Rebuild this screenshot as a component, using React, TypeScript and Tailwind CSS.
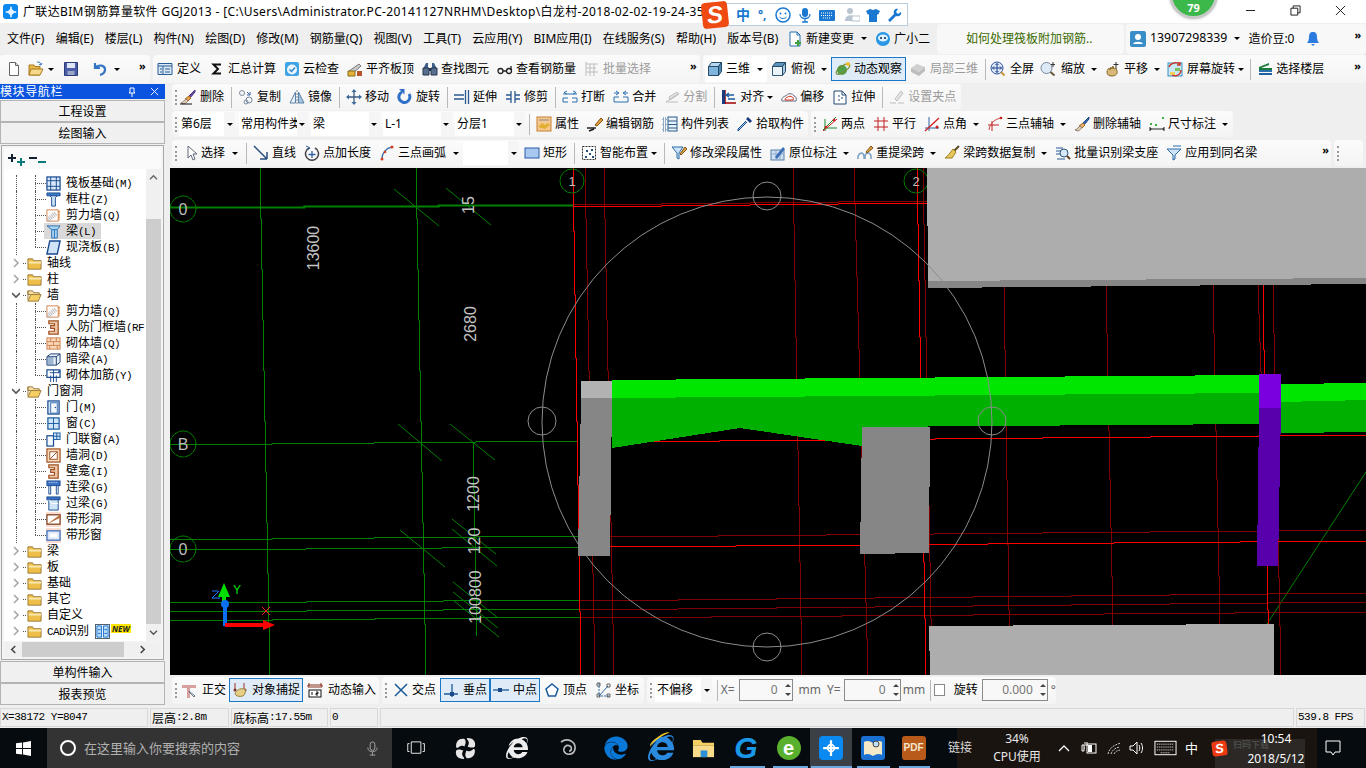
import type { ReactNode } from 'react'
import { FaEdge, FaInternetExplorer } from 'react-icons/fa'

const I: Record<string, ReactNode> = {
  new: <><path d="M3.5 1.5h6l3 3v10h-9z" fill="#fff" stroke="#666" /><path d="M9.5 1.5v3h3" fill="#ddd" stroke="#666" /></>,
  open: <><path d="M1 4h5l1 1.5h5V14H1z" fill="#e8b94a" stroke="#a87a20" /><path d="M3 8h12l-3 6H1z" fill="#f6d98a" stroke="#a87a20" /><path d="M9 1c3 0 4 1 4 3M13 4l-2-.5M13 4l1-2" stroke="#3a78c8" fill="none" /></>,
  save: <><path d="M1.5 1.5h13v13h-13z" fill="#4a5fa8" stroke="#2b3a78" /><path d="M4 2h8v5H4z" fill="#dfe6f6" /><path d="M4.5 10h7v4h-7z" fill="#9aa7c8" /></>,
  undo: <path d="M3 2v5h5M3.5 6.5C7 3 13 4.5 13 8.5c0 2.500-2 4.500-5 5.500" fill="none" stroke="#3474c4" strokeWidth="2.200" />,
  define: <><path d="M1 2.500h14v11H1z" fill="#dbe8f6" stroke="#2a5f95" /><path d="M1 5h14M6 5v8.500M3 8h2M3 11h2M8 8h5M8 11h5" stroke="#2a5f95" /></>,
  sigma: <path d="M12 3.500H4.500L9 8l-4.500 4.500H12" fill="none" stroke="#111" strokeWidth="2" />,
  cloud: <><rect x="1" y="1" width="14" height="14" rx="2" fill="#3fa3e4" /><circle cx="8" cy="8.500" r="5" fill="#eaf6ff" /><path d="M5.500 8.500l2 2 3.500-4" fill="none" stroke="#2a83c8" strokeWidth="1.500" /></>,
  flat: <><path d="M2 10l10-7 2 2-9 8z" fill="#c9c9c9" stroke="#777" /><path d="M1 10h7v5H1z" fill="#e4b43a" stroke="#8a6a18" /><path d="M10 10h5v5h-5z" fill="#b8542c" /></>,
  binoc: <><path d="M2 6l2-4h2v5H2zM14 6l-2-4h-2v5h4z" fill="#3d5f8a" /><path d="M1 7h6v7H1zM9 7h6v7H9z" fill="#5a6f8f" stroke="#23364f" /><path d="M7 7h2v3H7z" fill="#23364f" /></>,
  glasses: <><circle cx="3.500" cy="10" r="2.500" fill="none" stroke="#222" strokeWidth="1.300" /><circle cx="12" cy="10" r="2.500" fill="none" stroke="#222" strokeWidth="1.300" /><path d="M6 10h3.500M14 9V5" stroke="#222" strokeWidth="1.300" /></>,
  batch: <path d="M2 1v14M2 3h12M2 7h10M2 11h12M6 3v12M10 3v12" stroke="#bdbdbd" fill="none" />,
  cube: <><path d="M1.500 5.500h10v9h-10z" fill="#7fb4dc" stroke="#244a68" /><path d="M1.500 5.500l3-4h10l-3 4z" fill="#b7d8ee" stroke="#244a68" /><path d="M11.500 5.500l3-4v9l-3 4z" fill="#4e86b2" stroke="#244a68" /></>,
  cubeTop: <><path d="M1.500 5.500h10v9h-10z" fill="#eaf3fa" stroke="#345a78" /><path d="M1.500 5.500l3-4h10l-3 4z" fill="#5c93bd" stroke="#244a68" /><path d="M11.500 5.500l3-4v9l-3 4z" fill="#a8cbe3" stroke="#244a68" /></>,
  orbit: <><circle cx="7" cy="9" r="5" fill="#4ea04a" /><ellipse cx="8" cy="8" rx="8" ry="3" transform="rotate(-35 8 8)" fill="none" stroke="#7a8a2a" /><circle cx="13" cy="3" r="2" fill="#f0c030" /></>,
  local3d: <><path d="M1 7l6-4 8 3-6 5z" fill="#d0d0d0" /><path d="M1 7l8 4v4l-8-4zM9 11l6-5v4l-6 5z" fill="#bcbcbc" /></>,
  full: <><circle cx="7" cy="7" r="6" fill="#dfeafa" stroke="#2a4f9a" /><path d="M7 2.500v9M2.500 7h9M7 2.500l-1.500 1.500M7 2.500l1.500 1.500M7 11.500l-1.500-1.500M7 11.500l1.500-1.500M2.500 7l1.500-1.500M2.500 7l1.500 1.500M11.500 7l-1.500-1.500M11.500 7l-1.500 1.500" stroke="#1c3f8a" fill="none" /><path d="M11 11l3.500 3.500" stroke="#c8963a" strokeWidth="2" /></>,
  zoom: <><circle cx="6.500" cy="7" r="5.500" fill="#dceaf8" stroke="#7a8a9a" /><path d="M10.500 11l4 3.500" stroke="#6a5a3a" strokeWidth="2" /><path d="M13 1v5M11 3.500h4" stroke="#333" /></>,
  pan: <><path d="M2 11c0-2 1-3 2-4l1 2 1-3 1 2 1-3 1 3 2-1 1 3c1 3-2 5-5 5-3 0-5-1-5-4z" fill="#d8b878" stroke="#8a6a30" /><path d="M11 1v6M8.500 3.500h5" stroke="#333" /></>,
  screen: <><rect x="1" y="2" width="14" height="13" fill="#c8e8f4" stroke="#3a90c0" /><path d="M3 11h5v3H3z" fill="#f0d060" /><path d="M8 7h5v3H8z" fill="#7cc060" /><path d="M2 6a7 6 0 0 1 11-3M13 1v3h-3M14 9a6 6 0 0 1-9 5" fill="none" stroke="#d03020" strokeWidth="1.300" /></>,
  layers: <><path d="M2 6l10-4v2L4 7h11v2H2z" fill="#1a7a3a" /><path d="M2 9l13 0v2H2z" fill="#2a70b0" /><path d="M2 12h13v2H2z" fill="#2060a0" /></>,
  erase: <><path d="M15 1l-6 6 1 2 5-6z" fill="#6a4fa0" stroke="#4a3080" /><path d="M9 7l2 2-3 3-3-2z" fill="#e6a050" stroke="#a06820" /><path d="M1 14c2-1 4-3 5-4l2 2c-1 1-2 2-4 3z" fill="#e0d0b8" stroke="#908070" /><path d="M0 15h12" stroke="#111" /></>,
  copy: <><circle cx="4" cy="4" r="2.500" fill="none" stroke="#7a8aa0" /><circle cx="11" cy="11" r="3" fill="none" stroke="#7a8aa0" /><circle cx="8" cy="13" r="2" fill="none" stroke="#7a8aa0" /><path d="M9 3l3 3M12 3v3H9" fill="none" stroke="#3a6aa8" /></>,
  mirror: <><path d="M6.500 3v11H1z" fill="#e8f0f8" stroke="#5a80a8" /><path d="M9.500 3v11H15z" fill="#a8c8e0" stroke="#5a80a8" /><path d="M8 1v14" stroke="#7a8a9a" strokeDasharray="2 1" /></>,
  move: <><path d="M8 1v14M1 8h14" stroke="#3a5a80" strokeWidth="1.300" /><path d="M8 0l2.500 3h-5zM8 16l2.500-3h-5zM0 8l3-2.500v5zM16 8l-3-2.500v5z" fill="#3a6aa0" /></>,
  rotate: <><path d="M12 5A5.500 5.500 0 1 1 5 3" fill="none" stroke="#2e6fc8" strokeWidth="3" /><path d="M2 0h5.500v5.500z" fill="#2e6fc8" /></>,
  extend: <path d="M0 6h10M0 10h10M11.500 1v14M14.500 1v14M10 6H7M10 10H7" stroke="#2a5a90" strokeWidth="1.300" />,
  trim: <path d="M1 6h5M1 10h5M10 6h5M10 10h5M6 2v12M10 2v12" stroke="#2a5a90" strokeWidth="1.300" />,
  breakIt: <path d="M1 5h14M1 13h5M10 13h5M1 9v4M15 9v4M1 9h5M10 9h5M5 2L2 3.500 5 5M11 2l3 1.500L11 5" stroke="#2a70b0" fill="none" />,
  merge: <path d="M1 8h5M10 8h5M1 13h14M1 8v5M15 8v5M1 4h4M15 4h-4M3 2l3 2-3 2M13 2l-3 2 3 2" stroke="#2a70b0" fill="none" />,
  split: <><path d="M2 13L14 5M2 13h12M5 8l8-5 2 2-9 6z" fill="#e4e4e4" stroke="#bdbdbd" /></>,
  align: <><path d="M4 1v14M4 14h11" stroke="#a00000" strokeWidth="1.500" /><path d="M1 1h3v14H1z" fill="#1a3a80" /><path d="M8 4l-3 2 3 2M5 6h8M7 10h7" stroke="#1a5aa0" fill="none" strokeWidth="1.300" /></>,
  offset: <><path d="M1 12c-1-3 2-5 4-5 1-3 7-3 8 0 2 0 3 3 2 5z" fill="#fff" stroke="#5a6a80" /><path d="M4 11c0-2 2-3 3-3 1-1 3-1 4 0 1 0 2 1 1 3z" fill="none" stroke="#e03020" /></>,
  stretch: <><path d="M2 2h8l4 4v9H2z" fill="#fff" stroke="#24496f" /><path d="M10 2v4h4M7 6v2M7 10v2M10 8v2" stroke="#24496f" fill="none" /></>,
  setgrip: <path d="M1 14h6M9 14h6M6 10l6-8 2 2-6 8z" fill="#e6e6e6" stroke="#bdbdbd" />,
  prop: <><rect x="1" y="1" width="14" height="14" fill="#f6c890" stroke="#c88030" /><path d="M3 4h10" stroke="#888" /><path d="M2 11l4-4 3 2 3-2 2 2-5 4z" fill="#e0b030" /></>,
  editBar: <><path d="M0 12h9" stroke="#222" strokeWidth="1.500" /><path d="M8 9l6-7 2 2-6 6z" fill="#e0a040" stroke="#805010" /><path d="M2 15l5-2" stroke="#111" strokeWidth="1.500" /></>,
  list: <><path d="M1 2h3v3H1zM1 7h3v3H1zM1 12h3v3H1z" fill="none" stroke="#2a5a8a" strokeDasharray="1 1" /><rect x="6" y="1" width="9" height="14" fill="#e8f2fa" stroke="#2a5a8a" /><path d="M6 5h9M6 8.500h9M6 12h9" stroke="#2a5a8a" /></>,
  pick: <><path d="M10 6L2 14l-1 1v-2l8-8" fill="#9cc8f0" stroke="#1a4a90" /><path d="M9 3l4 4 2-2-4-4z" fill="#1a3a80" /></>,
  two: <><path d="M2 12h13M3 3v12M1 14L14 1" stroke="#1a8a2a" /><path d="M1 15L15 3" stroke="#d02020" /><circle cx="4" cy="11" r="1.300" fill="#d02020" /><circle cx="12" cy="4" r="1.300" fill="#d02020" /></>,
  parallel: <path d="M1 5h14M1 11h14M5 1v14M11 1v14" stroke="#c02020" strokeWidth="1" fill="none" />,
  angle: <><path d="M1 12h14M5 1v14" stroke="#2a60a8" /><path d="M1 15L15 2" stroke="#d02020" strokeWidth="1.300" /><circle cx="13" cy="11" r="1.500" fill="#d02020" /></>,
  arcAxis: <><path d="M1 9h11M5 5v10" stroke="#c02020" /><path d="M2 14C3 7 8 3 14 2" stroke="#d04040" fill="none" /><circle cx="14" cy="2" r="1.300" fill="#c02020" /></>,
  delAxis: <><path d="M15 1l-6 6 1 2 5-6z" fill="#3a70c0" stroke="#1a4080" /><path d="M9 7l2 2-3 3-3-2z" fill="#e8b070" stroke="#a06820" /><path d="M1 14c2-1 4-3 5-4l2 2c-1 1-2 2-4 3z" fill="#e0d0b8" stroke="#908070" /></>,
  dim: <><path d="M1 11v4M15 11v4M1 13h14" stroke="#222" /><path d="M3 13l-2-1v2zM13 13l2-1v2z" fill="#222" /><path d="M1 7h2v2H1zM6 8h2v2H6zM13 1h2v2h-2z" fill="#40b040" /></>,
  select: <path d="M3 1v12l3-3 2 5 2-1-2-5h4z" fill="#fff" stroke="#606a7a" />,
  line: <path d="M1 1l13 13M14 14V7M14 14H7" stroke="#2a4f80" strokeWidth="1.500" fill="none" />,
  ptLen: <><path d="M5 3a6.500 6.500 0 1 0 6 0" fill="none" stroke="#444" strokeWidth="1.500" /><path d="M8 6v7M4.500 9.500h7" stroke="#3060a0" strokeWidth="1.300" /><path d="M2 1l4 2-3 2" fill="none" stroke="#2a5a9a" /></>,
  arc: <><path d="M3 14C3 8 7 3 13 2" fill="none" stroke="#3a6aa8" strokeWidth="1.300" /><circle cx="3" cy="14" r="1.500" fill="#d04020" /><circle cx="6" cy="7" r="1.300" fill="#d04020" /><circle cx="13" cy="2" r="1.500" fill="#d04020" /></>,
  rect: <rect x="1" y="3" width="14" height="10" fill="#a8c8f0" stroke="#2a5aa8" />,
  smart: <><path d="M1.500 1.500h13v13h-13z" fill="#fff" stroke="#333" strokeDasharray="2 1" /><path d="M5 5h2v2H5zM10 4h2v2h-2zM8 8h2v2H8zM4 11h2v2H4zM11 11h2v2h-2z" fill="#2a5080" /></>,
  modBeam: <><path d="M1 2h11L8 8v6l-2-1V8z" fill="#cfe4f6" stroke="#2a6aa8" /><path d="M9 9l5-7 2 2-6 6z" fill="#e0a848" stroke="#805010" /></>,
  inPlace: <><rect x="1" y="5" width="13" height="10" fill="#cfe0f2" stroke="#5a7ea8" /><path d="M1 9h13M6 5v10M10 5v10" stroke="#8ea8c8" /><path d="M5 12l8-10 2 2-8 10z" fill="#3a70b8" /></>,
  reBeam: <><path d="M1 14v-3c2-4 5-4 6 0v3M8 14v-3c1-4 5-4 6 0v3" fill="none" stroke="#7aa0c8" strokeWidth="1.500" /><path d="M9 7l5-6 2 2-6 5z" fill="#e0a848" stroke="#805010" /></>,
  broom: <><path d="M15 1l-5 5" stroke="#5a4a20" strokeWidth="2" /><path d="M9 4l3 3-4 6H1c3-2 5-5 8-9z" fill="#e8c85a" stroke="#9a8020" /></>,
  batchId: <><path d="M1 3h7M1 6h5M1 9h5" stroke="#2a5a9a" /><circle cx="9" cy="8" r="4" fill="#d8e8f6" stroke="#2a5a7a" /><path d="M12 11l3 3" stroke="#604020" strokeWidth="2" /><path d="M2 14h8" stroke="#2a5a9a" /></>,
  apply: <><path d="M1 4h14L9 10v4l-2 1v-5z" fill="#cfe4f6" stroke="#2a6aa8" /><path d="M7 1h8" stroke="#2a6aa8" /></>,
  ortho: <><path d="M1 3h14v3H9v10H6V6H1z" fill="#d9a0a0" /><path d="M8 9l6 5-1 1-5-5z" fill="#fff" stroke="#6a7a8a" /></>,
  snap: <><path d="M3 1v6M12 1v6" stroke="#a03020" /><circle cx="3" cy="8" r="1.500" fill="#803020" /><circle cx="13" cy="8" r="1.500" fill="#803020" /><path d="M3 12c1-4 5-6 10-5 1 2 0 6-2 7-4 1-7 0-8-2z" fill="#e8cf88" stroke="#9a8040" /></>,
  dyn: <><path d="M1 3h14v2H1z" fill="none" stroke="#8a3020" /><path d="M2 1v3M14 1v3" stroke="#8a3020" /><rect x="2" y="8" width="12" height="7" fill="#fff" stroke="#111" /><path d="M5 10v3M9 10h2v1.500H9V13h2" stroke="#111" fill="none" /></>,
  cross: <path d="M2 2l12 12M14 2L2 14" stroke="#1a5a9a" strokeWidth="1.500" />,
  perp: <><path d="M1 12h14M9 2v13" stroke="#1a5a9a" strokeWidth="1.300" /><rect x="7" y="10" width="4" height="4" fill="#1a4a8a" /></>,
  mid: <><path d="M0 8h16" stroke="#1a5a9a" strokeWidth="1.300" /><rect x="5" y="6" width="4" height="4" fill="#1a4a8a" /></>,
  vertex: <path d="M8 2l6 5-2.500 7h-7L2 7z" fill="#fff" stroke="#1a5a9a" strokeWidth="1.500" />,
  coord: <><path d="M4 1v13h11" stroke="#2a70b0" strokeDasharray="2 1" fill="none" /><path d="M4 14L13 4" stroke="#2a70b0" /><path d="M2 1h3v3H2zM12 2h3v3h-3zM2 12h3v3H2zM12 12h3v3h-3z" fill="none" stroke="#444" strokeWidth=".8" /></>,
  doc: <><path d="M3 1h7l3 3v11H3z" fill="#fff" stroke="#2a70b0" /><path d="M10 1v3h3" fill="none" stroke="#2a70b0" /><path d="M11 9v6M8 12h6" stroke="#40a040" strokeWidth="2.200" /></>,
  bot: <><path d="M8 1c4 0 7 3 7 7 0 4-3 7-7 7s-7-3-7-7c0-4 3-7 7-7z" fill="#2a98e4" /><ellipse cx="8" cy="7" rx="5" ry="3.500" fill="#dff2ff" /><circle cx="6" cy="7" r="1" fill="#124" /><circle cx="10" cy="7" r="1" fill="#124" /></>,
  user: <><rect x="0" y="0" width="16" height="16" rx="2" fill="#3a8ec8" /><circle cx="8" cy="6" r="3" fill="#fff" /><path d="M3 13c1-3 9-3 10 0z" fill="#fff" /></>,
  bell: <><path d="M8 1c3 0 4 2 4 5 0 3 1 5 2 6H2c1-1 2-3 2-6 0-3 1-5 4-5z" fill="#2a7ae0" /><path d="M6 13h4l-2 2z" fill="#2a7ae0" /></>,
  raft: <><rect x="1" y="1" width="14" height="14" fill="#d8e8f8" stroke="#1a4a90" strokeWidth="1.300" /><path d="M5 1v14M11 1v14M1 5h14M1 11h14" stroke="#1a4a90" /></>,
  col: <><path d="M1 1h14v3H1z" fill="#3a80c8" stroke="#1a4a90" /><path d="M4 4l2 2v9h4V6l2-2z" fill="#cfe4f6" stroke="#1a4a90" /></>,
  shear: <><rect x="1" y="2" width="12" height="12" fill="#fff" stroke="#d08050" /><path d="M2 13l9-8" stroke="#bbb" strokeWidth="5" strokeDasharray="1 1" /><path d="M14 3v10" stroke="#e08030" strokeDasharray="2 1" strokeWidth="1.500" /></>,
  beam: <><path d="M1 2h14l-3 4v9H6V6z" fill="#a8d4f0" stroke="#2a70b8" /><path d="M6 6h6M9 6v9" stroke="#2a70b8" /></>,
  slab: <path d="M4 1h11l-3 14H1z" fill="#d0e4f8" stroke="#1a4a90" strokeWidth="1.500" />,
  frame: <path d="M3 1h10v14H3v-3h6V9H5V6h4V4H3z" fill="#f0c8a8" stroke="#a05020" strokeWidth="1.300" />,
  brick: <><rect x="1" y="2" width="14" height="12" fill="#f8d8b8" stroke="#d08050" /><path d="M1 6h14M1 10h14M5 2v4M11 2v4M8 6v4M4 10v4M12 10v4" stroke="#d08050" /></>,
  darkBeam: <><path d="M1 5l4-3h10v9l-4 3H1z" fill="#e8f0f8" stroke="#1a3a70" /><path d="M1 5h10v9M11 5l4-3" fill="none" stroke="#1a3a70" /><path d="M1 5h7v9H1z" fill="#6a90b8" opacity=".6" /></>,
  rebar: <><path d="M1 2h14v8H1z" fill="none" stroke="#1a4a90" strokeWidth="1.300" /><path d="M4 5h10M8 2v13M5 15V8M11 15V8" stroke="#1a4a90" /><path d="M13 3h2v2h-2z" fill="#1a4a90" /></>,
  door: <><rect x="2" y="1" width="12" height="14" fill="#d0e4f8" stroke="#1a4a90" strokeWidth="1.300" /><rect x="5" y="3" width="7" height="11" fill="#f4f8fc" stroke="#3a70b0" /><circle cx="10" cy="8" r=".8" fill="#1a4a90" /></>,
  win: <><rect x="2" y="2" width="12" height="12" fill="#cfe4f8" stroke="#1a5aa0" strokeWidth="1.300" /><path d="M8 2v12M2 8h12" stroke="#1a5aa0" /></>,
  doorWin: <><rect x="1" y="4" width="7" height="11" fill="#f4f8fc" stroke="#1a4a90" strokeWidth="1.300" /><rect x="8" y="1" width="7" height="7" fill="#cfe4f8" stroke="#1a5aa0" /><path d="M11.500 1v7M8 4.500h7" stroke="#1a5aa0" /></>,
  hole: <><rect x="1" y="1" width="14" height="14" fill="#f8dcc0" stroke="#a05020" strokeWidth="1.300" /><rect x="4" y="4" width="8" height="8" fill="#fff" stroke="#a05020" /><path d="M4 12l8-8" stroke="#a05020" /></>,
  link: <><rect x="1" y="1" width="14" height="5" fill="#3a70c8" stroke="#1a4a90" /><path d="M3 2.500h10" stroke="#dfeaf8" strokeDasharray="1 1" /><path d="M3 6v9M13 6v9M3 15h2M11 15h2M5 6v9M11 6v9" stroke="#1a4a90" /></>,
  lintel: <><rect x="1" y="1" width="14" height="3" fill="#3a70c8" stroke="#1a4a90" /><path d="M3 4h10v11H3z" fill="#cfe4f6" stroke="#1a4a90" /><path d="M3 4l3 4h7" stroke="#fff" fill="none" /></>,
  bandHole: <><rect x="0" y="0" width="16" height="16" fill="#fbdcd0" /><rect x="1" y="3" width="14" height="10" fill="#fff" stroke="#7a3a18" strokeWidth="1.300" /><path d="M1 13l14-7v-3z" fill="#b86a38" /></>,
  bandWin: <><rect x="0" y="0" width="16" height="16" fill="#fbdcd0" /><rect x="1" y="3" width="14" height="10" fill="#dde8fa" stroke="#3a6ab8" strokeWidth="1.300" /><rect x="4" y="6" width="8" height="4" fill="#fff" /></>,
  folder: <><path d="M1 3h5l1 2h8v9H1z" fill="#eec04a" stroke="#9a7a3a" /><path d="M2 6h13v2H2z" fill="#fbe9b0" /></>,
  folderOpen: <><path d="M1 3h5l1 2h6v2H1zM1 3v10" fill="#f4e0a8" stroke="#9a7a3a" /><path d="M4 7h11l-3 7H1z" fill="#f6cf62" stroke="#9a7a3a" /></>,
  cadGrid: <><rect x="0.500" y="0.500" width="15" height="15" fill="#fff" stroke="#4a5a6a" /><path d="M2 2h5v12H2zM9 2h5v12H9z" fill="#b8dcf8" stroke="#1a70d0" /><path d="M3 6h3M3 10h3M10 6h3M10 10h3" stroke="#1a70d0" /></>,
}

function Ico({ n, className = 'size-4' }: { n: string; className?: string }) {
  return (
    <svg viewBox="0 0 16 16" className={`${className} shrink-0`}>
      {I[n]}
    </svg>
  )
}

const Caret = ({ className = 'ml-[6px]' }: { className?: string }) => (
  <span className={`inline-block shrink-0 border-x-[3px] border-t-[3px] border-x-transparent border-t-black ${className}`} />
)
const Grip = () => <span className="mx-[3px] h-[15px] w-[2px] shrink-0 border-l-2 border-dotted border-[#9a9a9a]" />
const Sep = () => <span className="mx-[2.5px] h-[21px] w-px shrink-0 bg-[#b8b8b8]" />
const More = ({ className = '' }: { className?: string }) => (
  <span className={`-mt-[8px] text-[11px] font-bold leading-none ${className}`}>»</span>
)

type ToolProps = { i: string; t: string; caret?: boolean; cm?: string; off?: boolean; on?: boolean; gap?: string; px?: string }

function Tool({ i, t, caret, cm, off, on, gap = 'ml-[3px]', px = 'px-1' }: ToolProps) {
  return (
    <div className={`flex h-[24px] shrink-0 items-center ${px} ${on ? 'border border-[#1a78c8] bg-[#dfecf8]' : ''} ${off ? 'text-[#9b9b9b]' : 'text-black'}`}>
      <Ico n={i} />
      <span className={gap}>{t}</span>
      {caret && <Caret className={cm} />}
    </div>
  )
}

function Combo({ t, w }: { t: string; w: string }) {
  return (
    <div className={`flex h-[24px] shrink-0 items-center justify-between bg-white pl-[2px] ${w}`}>
      <span className="min-w-0 flex-1 overflow-hidden whitespace-nowrap leading-[18px]">{t}</span>
      <span className="flex h-full w-[11px] shrink-0 items-center justify-center bg-[#f5f5f5]">
        <Caret className="" />
      </span>
    </div>
  )
}

const Bar = ({ className, children }: { className: string; children: ReactNode }) => (
  <div className={`flex shrink-0 items-center rounded-sm bg-gradient-to-b from-[#fbfbfb] to-[#f4f4f4] ${className}`}>{children}</div>
)

const MENU = ['文件(F)', '编辑(E)', '楼层(L)', '构件(N)', '绘图(D)', '修改(M)', '钢筋量(Q)', '视图(V)', '工具(T)', '云应用(Y)', 'BIM应用(I)', '在线服务(S)', '帮助(H)', '版本号(B)']

type Node = { i: string; t: string; l?: string; kind: 'leaf' | 'last' | 'shut' | 'open'; extra?: boolean }
const TREE: Node[] = [
  { kind: 'leaf', i: 'raft', t: '筏板基础', l: '(M)' },
  { kind: 'leaf', i: 'col', t: '框柱', l: '(Z)' },
  { kind: 'leaf', i: 'shear', t: '剪力墙', l: '(Q)' },
  { kind: 'leaf', i: 'beam', t: '梁', l: '(L)' },
  { kind: 'last', i: 'slab', t: '现浇板', l: '(B)' },
  { kind: 'shut', i: 'folder', t: '轴线' },
  { kind: 'shut', i: 'folder', t: '柱' },
  { kind: 'open', i: 'folderOpen', t: '墙' },
  { kind: 'leaf', i: 'shear', t: '剪力墙', l: '(Q)' },
  { kind: 'leaf', i: 'frame', t: '人防门框墙', l: '(RF' },
  { kind: 'leaf', i: 'brick', t: '砌体墙', l: '(Q)' },
  { kind: 'leaf', i: 'darkBeam', t: '暗梁', l: '(A)' },
  { kind: 'last', i: 'rebar', t: '砌体加筋', l: '(Y)' },
  { kind: 'open', i: 'folderOpen', t: '门窗洞' },
  { kind: 'leaf', i: 'door', t: '门', l: '(M)' },
  { kind: 'leaf', i: 'win', t: '窗', l: '(C)' },
  { kind: 'leaf', i: 'doorWin', t: '门联窗', l: '(A)' },
  { kind: 'leaf', i: 'hole', t: '墙洞', l: '(D)' },
  { kind: 'leaf', i: 'frame', t: '壁龛', l: '(I)' },
  { kind: 'leaf', i: 'link', t: '连梁', l: '(G)' },
  { kind: 'leaf', i: 'lintel', t: '过梁', l: '(G)' },
  { kind: 'leaf', i: 'bandHole', t: '带形洞' },
  { kind: 'last', i: 'bandWin', t: '带形窗' },
  { kind: 'shut', i: 'folder', t: '梁' },
  { kind: 'shut', i: 'folder', t: '板' },
  { kind: 'shut', i: 'folder', t: '基础' },
  { kind: 'shut', i: 'folder', t: '其它' },
  { kind: 'shut', i: 'folder', t: '自定义' },
  { kind: 'shut', i: 'folder', t: 'CAD识别', extra: true },
]

const MonoTree = ({ t }: { t: string }) => <span className="font-['Liberation_Mono'] text-[11px] tracking-[-0.6px]">{t}</span>

function TreeRow({ n }: { n: Node }) {
  const folder = n.kind === 'shut' || n.kind === 'open'
  return (
    <div className="relative flex h-4 items-center whitespace-nowrap">
      {!folder && (
        <>
          <span className="absolute left-[12px] top-0 h-full border-l border-dotted border-[#555]" />
          <span className={`absolute left-[31px] top-0 border-l border-dotted border-[#555] ${n.kind === 'last' ? 'h-1/2' : 'h-full'}`} />
          <span className="absolute left-[31px] top-1/2 w-[11px] border-t border-dotted border-[#555]" />
          {n.t === '梁' && <span className="absolute left-[40px] top-0 h-full w-[57px] bg-[#d9d9d9]" />}
          <Ico n={n.i} className="relative ml-[42px] size-[15px]" />
          <span className="relative ml-[5px] text-black">
            {n.t}
            {n.l && <MonoTree t={n.l} />}
          </span>
        </>
      )}
      {folder && (
        <>
          <svg viewBox="0 0 8 10" className="ml-[8px] h-[10px] w-[8px] shrink-0">
            {n.kind === 'shut' ? <path d="M2 1l4 4-4 4" fill="none" stroke="#a8a8a8" strokeWidth="1.600" /> : <path d="M0 3l4 4 4-4" fill="none" stroke="#555" strokeWidth="1.600" />}
          </svg>
          <span className="ml-[3px] w-[3px] border-t border-dotted border-[#555]" />
          <Ico n={n.i} className="ml-[1px] size-[15px]" />
          <span className="ml-[5px] text-black">
            {n.t === 'CAD识别' ? (
              <>
                <MonoTree t="CAD" />识别
              </>
            ) : (
              n.t
            )}
          </span>
          {n.extra && (
            <>
              <Ico n="cadGrid" className="ml-[6px] size-[15px]" />
              <span className="-mt-[6px] ml-px bg-[#ffe600] px-px text-[8px] font-bold italic leading-[9px] text-[#222]">NEW</span>
            </>
          )}
        </>
      )}
    </div>
  )
}

const PanelBtn = ({ t }: { t: string }) => (
  <div className="flex h-[22px] shrink-0 items-center justify-center border border-[#b4b4b4] bg-[#f0f0f0] pt-[2px] text-[12px] text-black">{t}</div>
)

function Sidebar() {
  return (
    <aside className="flex h-[621px] w-[165px] shrink-0 flex-col text-[12px]">
      <div className="flex h-[15px] shrink-0 items-center justify-between bg-[#0a54e0] text-white">
        <span className="tracking-[0.6px]">模块导航栏</span>
        <span className="flex items-center gap-[13px] pr-[6px]">
          <svg viewBox="0 0 10 10" className="size-[10px]"><path d="M3 1h4v4l1 1H2l1-1zM5 6v4" fill="none" stroke="#fff" /></svg>
          <svg viewBox="0 0 10 10" className="size-[9px]"><path d="M1 1l8 8M9 1l-8 8" stroke="#fff" /></svg>
        </span>
      </div>
      <div className="mt-px flex flex-col">
        <PanelBtn t="工程设置" />
        <PanelBtn t="绘图输入" />
      </div>
      <div className="mx-[1px] mt-[1px] flex min-h-0 flex-1 flex-col border border-[#a8a8a8] bg-[#f4f4f4] p-[2px]">
        <div className="flex h-[21px] shrink-0 items-center bg-[#fafafa] pl-[4px] pt-[3px]">
          <svg viewBox="0 0 18 14" className="h-[14px] w-[18px]"><path d="M4 1v8M0 5h8" stroke="#123" strokeWidth="2" /><path d="M13 5v8M9 9h8" stroke="#0a7a7a" strokeWidth="2" /></svg>
          <svg viewBox="0 0 18 14" className="ml-[3px] h-[14px] w-[18px]"><path d="M0 5h8" stroke="#123" strokeWidth="2" /><path d="M9 9h8" stroke="#0a7a7a" strokeWidth="2" /></svg>
        </div>
        <div className="flex min-h-0 flex-1">
          <div className="min-w-0 flex-1 overflow-hidden bg-white pt-[6px]">
            {TREE.map((n, idx) => (
              <TreeRow key={idx} n={n} />
            ))}
          </div>
          <div className="flex w-[15px] shrink-0 flex-col bg-[#f0f0f0]">
            <div className="flex h-[50px] justify-center pt-[5px]">
              <svg viewBox="0 0 10 8" className="h-[7px] w-[9px]"><path d="M1 6l4-4 4 4" fill="none" stroke="#666" strokeWidth="1.600" /></svg>
            </div>
            <div className="flex-1 bg-[#cdcdcd]" />
            <div className="flex h-[17px] items-center justify-center">
              <svg viewBox="0 0 10 8" className="h-[7px] w-[9px]"><path d="M1 2l4 4 4-4" fill="none" stroke="#555" strokeWidth="1.600" /></svg>
            </div>
          </div>
        </div>
        <div className="mt-px flex h-[15px] shrink-0 items-center bg-[#f0f0f0]">
          <span className="flex w-[18px] justify-center"><svg viewBox="0 0 8 10" className="h-[9px] w-[7px]"><path d="M6 1L2 5l4 4" fill="none" stroke="#444" strokeWidth="1.800" /></svg></span>
          <span className="h-full w-[102px] bg-[#cdcdcd]" />
          <span className="ml-[9px] flex w-[18px] justify-center"><svg viewBox="0 0 8 10" className="h-[9px] w-[7px]"><path d="M2 1l4 4-4 4" fill="none" stroke="#444" strokeWidth="1.800" /></svg></span>
        </div>
      </div>
      <div className="mt-[1px] flex flex-col">
        <PanelBtn t="单构件输入" />
        <PanelBtn t="报表预览" />
      </div>
    </aside>
  )
}

const GREEN = '#008000'
const DRED = '#800000'
const RED = '#ff0000'

// the viewport draws without anti-aliasing: long lines come out as 1px staircases
function stairs(a: number, b: number, c: number, d: number) {
  const dx = c - a
  const dy = d - b
  if (Math.abs(dy) >= Math.abs(dx)) {
    const n = Math.abs(dx) + 1
    let p = `M${a + 0.5} ${b}`
    for (let i = 0; i < n; i++) {
      const x = a + (i * Math.sign(dx)) + 0.5
      p += `H${x}V${b + (dy * (i + 1)) / n}`
    }
    return p
  }
  const n = Math.abs(dy) + 1
  let p = `M${a} ${b + 0.5}`
  for (let i = 0; i < n; i++) {
    const y = b + (i * Math.sign(dy)) + 0.5
    p += `V${y}H${a + (dx * (i + 1)) / n}`
  }
  return p
}

function CadView() {
  const green: number[][] = [
    [260, 168, 269, 675], [416, 168, 425, 675], [473, 442, 476, 636],
    [170, 444, 578, 441], [170, 539, 578, 536], [170, 549, 578, 547], [170, 602, 580, 600], [170, 611, 580, 609], [170, 620, 580, 617],
  ]
  const ticks: number[][] = [
    [394, 189, 439, 226], [446, 188, 491, 225], [398, 424, 442, 461], [450, 424, 495, 460], [400, 530, 445, 567], [452, 519, 496, 554],
    [452, 529, 497, 566], [453, 582, 498, 618], [453, 592, 498, 628], [454, 601, 499, 637], [1366, 472, 1267, 624],
  ]
  const dark: number[][] = [
    [585, 168, 594, 675], [604, 168, 613, 675], [793, 168, 801, 675], [854, 168, 867, 675], [923, 168, 931, 675], [1004, 285, 1009, 675], [1106, 285, 1112, 625], [1213, 285, 1219, 625], [1258, 285, 1261, 400], [1273, 285, 1280, 675],
    [610, 536, 1366, 530], [580, 600, 1366, 593], [580, 609, 1366, 602], [580, 617, 1366, 612], [573, 204, 927, 201],
  ]
  const bright: number[][] = [
    [573, 168, 580, 675], [917, 168, 925, 675], [1263, 285, 1268, 675], [573, 206, 927, 203], [612, 441, 1366, 435], [610, 546, 1366, 541],
  ]
  const dims: [string, number, number][] = [['13600', 313, 248], ['15', 468, 205], ['2680', 470, 324], ['1200', 473, 494], ['120', 474, 541], ['100800', 475, 597]]
  const bubbles: [string, number, number, number][] = [['0', 183, 209, 13], ['B', 183, 444, 13], ['0', 183, 549, 13], ['1', 572, 181, 12], ['2', 916, 181, 12]]
  return (
    <svg viewBox="170 168 1196 507" className="block h-[507px] w-[1196px] bg-black">
      <g fill="none">
        {green.map(([a, b, c, d], i) => <path key={i} d={stairs(a, b, c, d)} stroke={GREEN} />)}
        {ticks.map(([a, b, c, d], i) => <line key={i} x1={a} y1={b} x2={c} y2={d} stroke={GREEN} />)}
        <path d={stairs(170, 207, 573, 205)} stroke={GREEN} strokeWidth="2" />
        {dark.map(([a, b, c, d], i) => <path key={i} d={stairs(a, b, c, d)} stroke={DRED} />)}
        {bright.map(([a, b, c, d], i) => <path key={i} d={stairs(a, b, c, d)} stroke={RED} />)}
      </g>
      {bubbles.map(([t, x, y, r]) => (
        <g key={`${t}${y}${x}`}>
          <circle cx={x} cy={y} r={r} fill="none" stroke={GREEN} strokeDasharray="9 .5" />
          <text x={x} y={y} textAnchor="middle" dominantBaseline="central" fontSize={x < 200 ? 16 : 13} fontFamily="Liberation Sans" fill="#bcbcbc">{t}</text>
        </g>
      ))}
      {dims.map(([t, x, y]) => (
        <text key={t} x={x} y={y} transform={`rotate(-90 ${x} ${y})`} textAnchor="middle" dominantBaseline="central" fontSize="16" fontFamily="Liberation Sans" fill="#c4c4c4">{t}</text>
      ))}
      <g shapeRendering="crispEdges">
        <path d="M927 168H1366V278L928 281z" fill="#adadad" />
        <path d="M928 281L1366 278V284L928 288z" fill="#868686" />
        <path d="M581 381H612V398H581z" fill="#b2b2b2" />
        <path d="M581 398H612L610 556H578z" fill="#868686" />
        <path d="M612 380L1260 375V393L612 398z" fill="#00e600" />
        <path d="M612 398L1260 393V424L862 427V446L740 428L612 448z" fill="#00b000" />
        <path d="M862 427H930L929 553L860 554z" fill="#868686" />
        <path d="M1281 384L1366 383V400L1281 402z" fill="#00e600" />
        <path d="M1281 402L1366 400V432L1281 433z" fill="#00b000" />
        <path d="M1259 374H1281V408H1259z" fill="#7a00e0" />
        <path d="M1259 408H1281L1278 566H1257z" fill="#5800ac" />
        <path d="M929 626L1274 624V675H930z" fill="#adadad" />
      </g>
      <g fill="none" stroke="#8c8c8c">
        <circle cx="767" cy="422" r="225" />
        <circle cx="767" cy="196" r="14" />
        <circle cx="767" cy="647" r="14" />
        <circle cx="542" cy="421" r="14" />
        <circle cx="992" cy="421" r="14" />
      </g>
      <path d="M212 598l7-7M212 598h8M212 591h6" stroke="#1a78ff" fill="none" />
      <path d="M224 583l-6 14h12z" fill="#00e000" />
      <path d="M222 594h4v10h-4z" fill="#00e000" />
      <rect x="223" y="604" width="4" height="22" fill="#0a70f0" />
      <circle cx="225" cy="604" r="4" fill="#0a70f0" />
      <rect x="225" y="623" width="38" height="4" fill="#ff0000" />
      <path d="M263 620l12 5-12 5z" fill="#ff0000" />
      <text x="233" y="594" fontSize="12" fontFamily="Liberation Sans" fill="#00e000">Y</text>
      <path d="M262 607l8 8M270 607l-8 8" stroke="#ff2020" />
    </svg>
  )
}

function Taskbar() {
  const cell = 'relative flex h-full shrink-0 items-center justify-center'
  return (
    <div className="relative flex h-[40px] shrink-0 items-center overflow-hidden bg-[#060b10] text-white">
      <div className="absolute left-[957px] top-0 h-full w-[360px] bg-[#1a1410]">
        <div className="absolute left-[258px] top-[11px] h-[29px] w-[90px] bg-[#2b2825] pl-[18px] text-[9px] font-bold leading-[12px] text-[#4a4a48]">扫码下载</div>
      </div>
      <div className={`${cell} w-[47px]`}>
        <svg viewBox="0 0 16 16" className="size-[15px]"><path d="M0 2.500L6.500 1.600V7.500H0zM7.500 1.500L16 0V7.500H7.500zM0 8.500H6.500V14.400L0 13.500zM7.500 8.500H16V16L7.500 14.500z" fill="#fff" /></svg>
      </div>
      <div className="relative flex h-full w-[345px] shrink-0 items-center bg-[#333] pl-[13px] text-[#b0b0b0]">
        <span className="size-[16px] rounded-full border-2 border-white" />
        <span className="ml-[8px] text-[13px]">在这里输入你要搜索的内容</span>
        <svg viewBox="0 0 16 16" className="absolute left-[318px] size-[15px]"><rect x="5.500" y="1" width="5" height="9" rx="2.500" fill="none" stroke="#aaa" /><path d="M3 7c0 6 10 6 10 0M8 12v3M5 15h6" fill="none" stroke="#aaa" /></svg>
      </div>
      <div className={`${cell} w-[48px]`}>
        <svg viewBox="0 0 22 16" className="h-[14px] w-[21px]"><path d="M5 1h11v13H5z" fill="none" stroke="#fff" /><path d="M3 3H1v9h2M18 3h2v9h-2" fill="none" stroke="#fff" /></svg>
      </div>
      <div className={`${cell} w-[50px]`}>
        <svg viewBox="0 0 20 20" className="size-[21px]"><path d="M9 1C4 0 1 3 1 8c0 1 1 2 2 1 2-2 5-2 6-1 1-2 2-5 0-7zM19 8c1-5-2-8-7-8-1 0-1 1 0 2 2 2 1 5 0 6 2 1 5 2 7 0zM11 19c5 1 8-2 8-7 0-1-1-2-2-1-2 2-5 2-6 1-1 2-2 5 0 7zM1 12c-1 5 2 8 7 8 1 0 1-1 0-2-2-2-1-5 0-6-2-1-5-2-7 0z" fill="#e6e6e6" /></svg>
      </div>
      <div className={`${cell} w-[53px]`}>
        <FaInternetExplorer className="size-[22px] text-[#eeeeee]" />
      </div>
      <div className={`${cell} w-[49px]`}>
        <svg viewBox="0 0 20 20" className="size-[20px]"><path d="M3 4c7-5 15 0 14 7-1 6-9 7-11 2-1-3 2-7 6-5 2 1 2 5-1 5" fill="none" stroke="#bdbdbd" strokeWidth="1.600" /></svg>
      </div>
      <div className={`${cell} w-[47px]`}>
        <FaEdge className="size-[24px] text-[#0a78d7]" />
      </div>
      <div className={`${cell} w-[43px]`}>
        <FaInternetExplorer className="size-[26px] text-[#2a8ae0]" />
        <span className="absolute left-[9px] top-[8px] h-[8px] w-[24px] rotate-[-35deg] rounded-[50%] border-t-2 border-[#f0c020]" />
      </div>
      <div className={`${cell} w-[43px]`}>
        <svg viewBox="0 0 24 24" className="size-[23px]"><path d="M1 3h8l2 3h12v3H1z" fill="#f6cf62" /><path d="M1 9h22v12H1z" fill="#f9dc8a" /><path d="M9 14h7v7H9z" fill="#2a90d8" /></svg>
      </div>
      <div className={`${cell} w-[42px]`}>
        <span className="font-['Liberation_Sans'] text-[30px] font-bold italic leading-none text-[#1a98e8]">G</span>
      </div>
      <div className={`${cell} w-[43px]`}>
        <span className="flex size-[24px] items-center justify-center rounded-full bg-[#58b02c] font-['Liberation_Sans'] text-[20px] font-bold leading-none">e</span>
      </div>
      <div className={`${cell} w-[42px] bg-[#3a4045]`}>
        <span className="flex size-[24px] items-center justify-center rounded-[4px] bg-[#0a8af0]">
          <Glodon className="size-[18px]" />
        </span>
      </div>
      <div className={`${cell} w-[41px]`}>
        <svg viewBox="0 0 24 24" className="size-[24px]"><rect x="0" y="0" width="24" height="24" rx="3" fill="#1a70d0" /><path d="M3 6c3-2 6-1 9 1 3-2 6-3 9-1v13c-3-2-6-1-9 1-3-2-6-3-9-1z" fill="#f4e8c8" /><circle cx="15" cy="8" r="3" fill="#bfe0f8" stroke="#444" /></svg>
      </div>
      <div className={`${cell} w-[41px]`}>
        <span className="flex size-[24px] items-center justify-center rounded-[3px] bg-[#b85a1a] font-['Liberation_Sans'] text-[10px] font-bold text-[#f6e6d0]">PDF</span>
      </div>
      <span className="relative ml-[14px] w-[30px] text-[12px] text-[#d8d8d8]">链接</span>
      <div className="relative ml-[14px] flex w-[50px] flex-col items-center text-[12px] leading-[18px] text-[#e8e8e8]">
        <span>34%</span>
        <span className="whitespace-nowrap">CPU使用</span>
      </div>
      <div className="relative ml-[16px] flex items-center">
        <svg viewBox="0 0 12 8" className="h-[8px] w-[12px]"><path d="M1 7l5-5 5 5" fill="none" stroke="#fff" strokeWidth="1.300" /></svg>
        <svg viewBox="0 0 16 16" className="ml-[11px] size-[16px]"><path d="M1 5h2v6H1zM4 6V2M6 6V2M3 8h1" stroke="#fff" fill="none" /><rect x="6" y="4" width="9" height="9" fill="none" stroke="#fff" /><path d="M7 5h4v7H7z" fill="#fff" /></svg>
        <svg viewBox="0 0 16 16" className="ml-[10px] size-[16px]"><path d="M1 14c1-5 5-9 13-11M4 14c1-3 3-6 9-7M7 14c1-2 2-3 6-4" fill="none" stroke="#ccc" strokeDasharray="2 1" /></svg>
        <svg viewBox="0 0 16 16" className="ml-[6px] size-[16px]"><path d="M1 6h3l4-4v12l-4-4H1z" fill="none" stroke="#fff" /><path d="M10 5c1 2 1 4 0 6M12 3c2 3 2 7 0 10" fill="none" stroke="#fff" /></svg>
        <svg viewBox="0 0 24 16" className="ml-[9px] h-[16px] w-[23px]"><rect x="1" y="1" width="22" height="14" fill="none" stroke="#fff" /><path d="M3 4h18M3 7h18M3 10h18M7 13h10" stroke="#fff" strokeDasharray="1 1" /></svg>
        <span className="ml-[8px] text-[13px]">中</span>
        <span className="ml-[14px] flex size-[15px] rotate-[-8deg] items-center justify-center rounded-[3px] bg-[#ee3a12] font-['Liberation_Sans'] text-[13px] font-bold italic leading-none">S</span>
      </div>
      <div className="absolute left-[1245px] top-[1px] flex w-[62px] flex-col items-center text-[12px] leading-[20px]">
        <span>10:54</span>
        <span>2018/5/12</span>
      </div>
      <svg viewBox="0 0 16 16" className="absolute left-[1325px] top-[12px] size-[16px]"><path d="M1 1h14v11h-5l-2 3-2-3H1z" fill="none" stroke="#fff" /></svg>
      <span className="absolute bottom-0 left-[730px] h-[2px] w-[35px] bg-[#6aa8e0]" />
      <span className="absolute bottom-0 left-[773px] h-[2px] w-[35px] bg-[#6aa8e0]" />
      <span className="absolute bottom-0 left-[811px] h-[2px] w-[41px] bg-[#6aa8e0]" />
      <span className="absolute bottom-0 left-[857px] h-[2px] w-[33px] bg-[#6aa8e0]" />
      <span className="absolute bottom-0 left-[899px] h-[2px] w-[31px] bg-[#6aa8e0]" />
    </div>
  )
}

const Glodon = ({ className }: { className: string }) => (
  <svg viewBox="0 0 16 16" className={className}>
    <path d="M8 1v14M1 8h14" stroke="#fff" strokeWidth="2" />
    <circle cx="8" cy="8" r="3" fill="none" stroke="#fff" strokeWidth="1.400" />
  </svg>
)

function Spin({ v, w, className = '' }: { v: string; w: string; className?: string }) {
  return (
    <div className={`flex h-[22px] shrink-0 items-center border border-[#8a8a8a] bg-[#f8f8f8] pr-[1px] text-[#777] ${w} ${className}`}>
      <span className="flex-1 pr-[7px] text-right">{v}</span>
      <span className="flex flex-col gap-[6px]">
        <span className="block border-x-[3px] border-b-[3px] border-x-transparent border-b-[#444]" />
        <span className="block border-x-[3px] border-t-[3px] border-x-transparent border-t-[#444]" />
      </span>
    </div>
  )
}

const Cell = ({ w, children }: { w: string; children?: ReactNode }) => (
  <div className={`flex h-[19px] shrink-0 items-center border border-[#d8d8d8] pl-[1px] font-['Liberation_Mono'] text-[11px] tracking-[-0.5px] text-black ${w}`}>{children}</div>
)

export default function App() {
  return (
    <div className="relative flex h-[768px] w-[1366px] flex-col overflow-hidden bg-[#efefef] text-[12px] leading-none text-black [font-family:'Noto_Sans','Noto_Sans_CJK_SC',sans-serif]">
      {/* title */}
      <div className="flex h-[23px] shrink-0 items-center bg-white">
        <span className="ml-[3px] flex size-[15px] items-center justify-center rounded-[3px] bg-[#0a8af0]">
          <Glodon className="size-[12px]" />
        </span>
        <span className="ml-[5px] whitespace-nowrap tracking-[0.35px]">广联达BIM钢筋算量软件 GGJ2013 - [C:\Users\Administrator.PC-20141127NRHM\Desktop\白龙村-2018-02-02-19-24-35</span>
      </div>

      {/* sogou bar, score badge, window buttons */}
      <div className="absolute left-[712px] top-[3px] flex h-[23px] w-[196px] items-center border border-[#b8cce0] bg-white pl-[23px] text-[#1a78d0]">
        <span className="text-[14px] font-bold">中</span>
        <span className="ml-[8px] w-[14px] text-[12px] font-bold">°,</span>
        <svg viewBox="0 0 16 16" className="ml-[3px] size-[16px]"><circle cx="8" cy="8" r="7" fill="none" stroke="#1a78d0" strokeWidth="1.500" /><circle cx="5.500" cy="6.500" r="1" fill="#1a78d0" /><circle cx="10.500" cy="6.500" r="1" fill="#1a78d0" /><path d="M4.500 10c2 2 5 2 7 0" fill="none" stroke="#1a78d0" /></svg>
        <svg viewBox="0 0 16 16" className="ml-[6px] size-[16px]"><rect x="5" y="1" width="6" height="9" rx="3" fill="#1a78d0" /><path d="M3 7c0 6 10 6 10 0M8 12v3M5 15h6" fill="none" stroke="#1a78d0" strokeWidth="1.300" /></svg>
        <svg viewBox="0 0 16 16" className="ml-[6px] size-[16px]"><rect x="0" y="3" width="16" height="11" rx="1" fill="#1a78d0" /><path d="M2 6h12M2 8.500h12M4 11h8" stroke="#fff" strokeDasharray="1 1" /></svg>
        <svg viewBox="0 0 16 16" className="ml-[9px] size-[16px]"><circle cx="6" cy="4" r="3" fill="#b8c4d0" /><path d="M1 14c0-7 9-7 10-3v3z" fill="#b8c4d0" /><rect x="8" y="9" width="8" height="5" fill="#fff" stroke="#b8c4d0" /></svg>
        <svg viewBox="0 0 16 16" className="ml-[5px] size-[16px]"><path d="M1 4l4-2 3 1 3-1 4 2-2 4-1-1v8H4V7L3 8z" fill="#1a78d0" /></svg>
        <svg viewBox="0 0 16 16" className="ml-[6px] size-[16px]"><path d="M14 5l-3 2-2-2 2-3c-3-1-5 2-4 5l-6 6 2 2 6-6c3 1 6-1 5-4z" fill="#1a78d0" /></svg>
      </div>
      <span className="absolute left-[702px] top-[2px] flex size-[26px] rotate-[-6deg] items-center justify-center rounded-[4px] bg-[#ee4a12] font-['Liberation_Sans'] text-[24px] font-bold italic leading-none text-white">S</span>
      <div className="absolute left-[1169px] top-[-30px] flex size-[49px] items-end justify-center rounded-full border-[3px] border-[#c8c8c8] bg-[#3cb84a] pb-[3px] text-[11px] font-bold text-white shadow">79</div>
      <div className="absolute right-[6px] top-[5px] flex items-center">
        <svg viewBox="0 0 12 12" className="mr-[34px] size-[11px]"><path d="M1 6h10" stroke="#111" /></svg>
        <svg viewBox="0 0 12 12" className="mr-[34px] size-[11px]"><path d="M1 3.500h7.500V11H1zM3.500 3.500V1H11v7.500H8.500" fill="none" stroke="#111" /></svg>
        <svg viewBox="0 0 12 12" className="mr-[14px] size-[11px]"><path d="M1 1l10 10M11 1L1 11" stroke="#111" /></svg>
      </div>

      {/* menu */}
      <div className="flex h-[31px] shrink-0 items-center whitespace-nowrap">
        <div className="flex w-[783px] shrink-0 items-center gap-[11.25px] pl-[7px]">
          {MENU.map((m) => <span key={m}>{m}</span>)}
        </div>
        <Tool i="doc" t="新建变更" caret cm="ml-[7px]" />
        <Tool i="bot" t="广小二" />
        <div className="ml-[3px] flex h-[30px] w-[187px] shrink-0 items-center rounded-sm bg-[#f8f8f8] pl-[29px] text-[#3a6a00]">如何处理筏板附加钢筋..</div>
        <div className="ml-[2px] flex h-[30px] w-[240px] shrink-0 items-center rounded-sm bg-[#f8f8f8] pl-[4px]">
          <Ico n="user" />
          <span className="ml-[4px] text-[12.3px]">13907298339</span>
          <Caret className="ml-[7px]" />
          <span className="ml-[8px]">造价豆:0</span>
          <Ico n="bell" className="ml-[10px] size-4" />
          <More className="ml-[34px]" />
        </div>
      </div>

      {/* main toolbar */}
      <div className="flex h-[30px] shrink-0 items-center gap-[3px] whitespace-nowrap">
        <Bar className="h-[28px] w-[150px] pl-[6px]">
          <Ico n="new" />
          <Ico n="open" className="ml-[6px] size-4" />
          <Caret className="ml-[4px]" />
          <Ico n="save" className="ml-[9px] size-4" />
          <span className="ml-[4px]"><Sep /></span>
          <Ico n="undo" className="ml-[4px] size-4" />
          <Caret className="ml-[6px]" />
          <More className="ml-[19px]" />
        </Bar>
        <Bar className="h-[28px] w-[547px]">
          <Tool i="define" t="定义" gap="ml-1" />
          <Tool i="sigma" t="汇总计算" />
          <Tool i="cloud" t="云检查" />
          <Tool i="flat" t="平齐板顶" />
          <Tool i="binoc" t="查找图元" />
          <Tool i="glasses" t="查看钢筋量" />
          <Tool i="batch" t="批量选择" off />
          <More className="ml-[35px]" />
        </Bar>
        <Bar className="h-[28px] w-[663px] pl-[2px]">
          <div className="flex h-[26px] items-center bg-white pr-[4px]">
            <Tool i="cube" t="三维" px="px-[2px]" />
            <Caret className="ml-[5px]" />
          </div>
          <Tool i="cubeTop" t="俯视" caret gap="ml-1" />
          <Tool i="orbit" t="动态观察" on px="px-[3px]" />
          <Tool i="local3d" t="局部三维" off gap="ml-1" />
          <Sep />
          <Tool i="full" t="全屏" px="px-[2px]" gap="ml-1" />
          <Tool i="zoom" t="缩放" caret gap="ml-[5px]" />
          <Tool i="pan" t="平移" caret />
          <Tool i="screen" t="屏幕旋转" caret cm="ml-[3px]" px="px-[3px]" gap="ml-1" />
          <Sep />
          <Tool i="layers" t="选择楼层" />
          <More className="ml-[26px]" />
        </Bar>
      </div>

      {/* body */}
      <div className="flex shrink-0 whitespace-nowrap">
        <Sidebar />
        <div className="ml-[5px] flex w-[1196px] shrink-0 flex-col">
          <div className="flex h-[27px] shrink-0 items-start pl-[2px]">
            <Bar className="h-[26px] w-[789px]">
              <Grip />
              <Tool i="erase" t="删除" px="pl-0 pr-1" gap="ml-1" />
              <Sep />
              <Tool i="copy" t="复制" />
              <Tool i="mirror" t="镜像" />
              <Sep />
              <Tool i="move" t="移动" />
              <Tool i="rotate" t="旋转" />
              <Sep />
              <Tool i="extend" t="延伸" />
              <Tool i="trim" t="修剪" />
              <Sep />
              <Tool i="breakIt" t="打断" />
              <Tool i="merge" t="合并" />
              <Tool i="split" t="分割" off />
              <Sep />
              <Tool i="align" t="对齐" caret cm="ml-[3px]" />
              <Tool i="offset" t="偏移" />
              <Tool i="stretch" t="拉伸" />
              <Sep />
              <Tool i="setgrip" t="设置夹点" off />
            </Bar>
          </div>
          <div className="flex h-[29px] shrink-0 items-start gap-[3px] pl-[2px]">
            <Bar className="h-[26px] w-[636px]">
              <Grip />
              <span className="-ml-[1px]"><Combo t="第6层" w="w-[56px]" /></span>
              <span className="w-[4px]" />
              <Combo t="常用构件类型" w="w-[69px]" />
              <span className="w-[3px]" />
              <Combo t="梁" w="w-[69px]" />
              <span className="w-[3px]" />
              <Combo t="L-1" w="w-[69px]" />
              <span className="w-[3px]" />
              <Combo t="分层1" w="w-[70px]" />
              <span className="w-[2px]" />
              <Sep />
              <Tool i="prop" t="属性" px="pl-[3px] pr-1" />
              <Tool i="editBar" t="编辑钢筋" />
              <Tool i="list" t="构件列表" />
              <Tool i="pick" t="拾取构件" />
            </Bar>
            <Bar className="h-[26px] w-[422px]">
              <Grip />
              <Tool i="two" t="两点" px="pl-[3px] pr-1" />
              <Tool i="parallel" t="平行" />
              <Tool i="angle" t="点角" caret />
              <Tool i="arcAxis" t="三点辅轴" caret />
              <Tool i="delAxis" t="删除辅轴" />
              <Tool i="dim" t="尺寸标注" caret />
            </Bar>
          </div>
          <div className="flex h-[28px] shrink-0 items-start gap-[3px] pl-[2px]">
            <Bar className="h-[26px] w-[1159px]">
              <Grip />
              <Tool i="select" t="选择" caret cm="ml-[7px]" px="px-[5px]" gap="ml-0" />
              <Sep />
              <Tool i="line" t="直线" />
              <Tool i="ptLen" t="点加长度" />
              <Tool i="arc" t="三点画弧" caret cm="ml-[7px]" />
              <Combo t="" w="w-[56px]" />
              <Tool i="rect" t="矩形" px="pl-[5px] pr-1" />
              <Sep />
              <Tool i="smart" t="智能布置" caret cm="ml-[3px]" />
              <Sep />
              <Tool i="modBeam" t="修改梁段属性" />
              <Tool i="inPlace" t="原位标注" caret />
              <Tool i="reBeam" t="重提梁跨" caret />
              <Tool i="broom" t="梁跨数据复制" caret />
              <Tool i="batchId" t="批量识别梁支座" />
              <Tool i="apply" t="应用到同名梁" />
              <More className="ml-[61px]" />
            </Bar>
            <Bar className="h-[26px] w-[29px]">
              <Grip />
            </Bar>
          </div>
          <CadView />
          <div className="mt-[1px] flex h-[28px] shrink-0 items-center gap-[3px] pl-[2px]">
            <Bar className="h-[27px] w-[207px]">
              <Grip />
              <Tool i="ortho" t="正交" px="pl-[1px] pr-[3px]" gap="ml-[5px]" />
              <Tool i="snap" t="对象捕捉" on px="px-[2px]" gap="ml-1" />
              <Tool i="dyn" t="动态输入" gap="ml-[5px]" />
            </Bar>
            <Bar className="h-[27px] w-[262px]">
              <Grip />
              <Tool i="cross" t="交点" px="px-[3px]" />
              <span className="w-px" />
              <Tool i="perp" t="垂点" on px="px-[2px]" gap="ml-1" />
              <Tool i="mid" t="中点" on px="px-[2px]" gap="ml-1" />
              <Tool i="vertex" t="顶点" />
              <Tool i="coord" t="坐标" gap="ml-1" />
            </Bar>
            <Bar className="h-[27px] w-[409px]">
              <Grip />
              <Combo t="不偏移" w="w-[57px]" />
              <span className="w-[3px]" />
              <Sep />
              <span className="text-[#666]">X=</span>
              <Spin v="0" w="w-[54px]" className="ml-[4px]" />
              <span className="ml-[6px] text-[#666]">mm</span>
              <span className="ml-[6px] text-[#666]">Y=</span>
              <Spin v="0" w="w-[57px]" className="ml-[3px]" />
              <span className="ml-[2px] text-[#666]">mm</span>
              <span className="w-[3px]" />
              <Sep />
              <span className="size-[12px] border border-[#888] bg-white" />
              <span className="ml-[9px]">旋转</span>
              <Spin v="0.000" w="w-[66px]" className="ml-[4px]" />
              <span className="ml-[3px] text-[#666]">°</span>
            </Bar>
          </div>
        </div>
      </div>

      {/* status */}
      <div className="mt-[3px] flex h-[19px] shrink-0 gap-[2px]">
        <Cell w="w-[148px]">X=38172 Y=8047</Cell>
        <Cell w="w-[79px]"><span className="font-['Noto_Sans_CJK_SC'] text-[12px] tracking-normal">层高</span>:2.8m</Cell>
        <Cell w="w-[97px]"><span className="font-['Noto_Sans_CJK_SC'] text-[12px] tracking-normal">底标高</span>:17.55m</Cell>
        <Cell w="w-[48px]">0</Cell>
        <Cell w="w-[914px]" />
        <Cell w="w-[69px]">539.8 FPS</Cell>
      </div>
      <div className="h-[1px] shrink-0" />
      <Taskbar />
    </div>
  )
}
